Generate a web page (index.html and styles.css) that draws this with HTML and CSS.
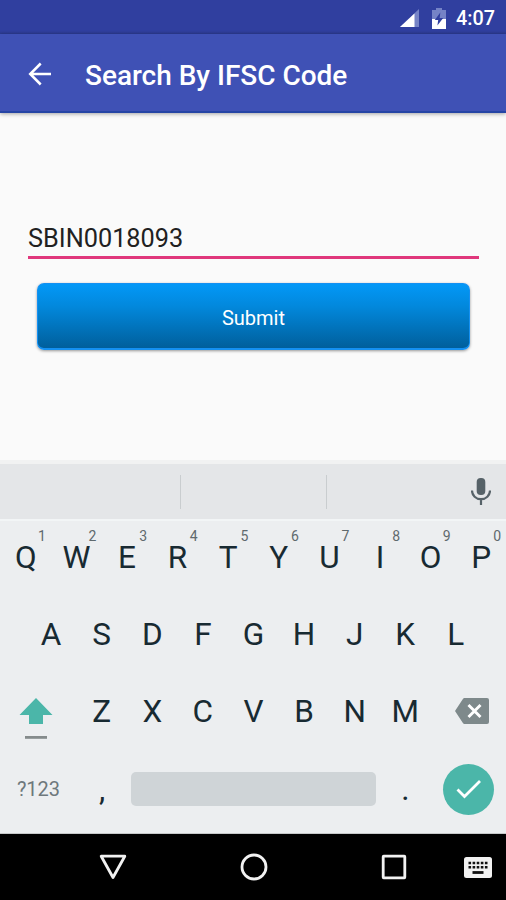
FILE: index.html
```html
<!DOCTYPE html>
<html lang="en">
<head>
<meta charset="utf-8">
<title>Search By IFSC Code</title>
<link rel="stylesheet" href="styles.css">
</head>
<body>
<div class="screen">
  <div class="status">
    <svg class="signal" width="21" height="20" viewBox="0 0 21 20"><path d="M20 1v18H1z" fill="#7583c6"/><path d="M15.500 5.500V19H1z" fill="#fff"/></svg>
    <svg class="battery" width="14" height="21" viewBox="0 0 14 21"><path d="M4 0h6v2h4v9H0V2h4z" fill="#7583c6"/><path d="M0 11h14v10H0z" fill="#fff"/><path d="M8.300 4.500 2.800 12h3.400l-.8 5.500L11.200 10H7.700z" fill="#303f9f"/></svg>
    <span class="time">4:07</span>
  </div>
  <header class="appbar">
    <svg class="back" width="24" height="24" viewBox="0 0 24 24" fill="none" stroke="#fff" stroke-width="2.500"><path d="M23 12H3M12.700 1.500 2.200 12l10.500 10.500"/></svg>
    <h1 class="title">Search By IFSC Code</h1>
  </header>
  <main class="form">
    <div class="field">SBIN0018093</div>
    <button class="submit">Submit</button>
  </main>
  <section class="keyboard">
    <div class="suggest">
      <span></span><span></span>
      <div class="micbox"><svg width="20" height="28" viewBox="0 0 20 28"><rect x="5.700" y="0" width="8.600" height="17" rx="4" fill="#566268"/><path d="M1 12.500c0 5 4 8.700 9 8.700s9-3.700 9-8.700M10 21v6" fill="none" stroke="#566268" stroke-width="2.200"/></svg></div>
    </div>
    <div class="row top">
      <div class="key">Q<sup>1</sup></div><div class="key">W<sup>2</sup></div><div class="key">E<sup>3</sup></div><div class="key">R<sup>4</sup></div><div class="key">T<sup>5</sup></div><div class="key">Y<sup>6</sup></div><div class="key">U<sup>7</sup></div><div class="key">I<sup>8</sup></div><div class="key">O<sup>9</sup></div><div class="key">P<sup>0</sup></div>
    </div>
    <div class="row middle">
      <div class="key">A</div><div class="key">S</div><div class="key">D</div><div class="key">F</div><div class="key">G</div><div class="key">H</div><div class="key">J</div><div class="key">K</div><div class="key">L</div>
    </div>
    <div class="row">
      <div class="key wide shift"><svg width="34" height="42" viewBox="0 0 34 42"><path d="M17 0 33.500 17H24v9H10v-9H.5z" fill="#4bb6a9"/><path d="M6 38h22v2.800H6z" fill="#858b8c"/></svg></div>
      <div class="key">Z</div><div class="key">X</div><div class="key">C</div><div class="key">V</div><div class="key">B</div><div class="key">N</div><div class="key">M</div>
      <div class="key wide delete"><svg width="34" height="26" viewBox="0 0 34 26"><path d="M9.500 0H32q2 0 2 2v22q0 2-2 2H9.500q-1 0-1.600-1L0 13 7.900 1q.6-1 1.600-1z" fill="#7e898b"/><path d="m13.500 7 12 12m0-12-12 12" stroke="#fff" stroke-width="2.900"/></svg></div>
    </div>
    <div class="row bottom">
      <div class="key symbols">?123</div>
      <div class="key comma">,</div>
      <div class="space"></div>
      <div class="key period">.</div>
      <div class="enter"><svg width="26" height="20" viewBox="0 0 26 20"><path d="m1.500 10.500 7 7L24 2" fill="none" stroke="#fff" stroke-width="2.800"/></svg></div>
    </div>
  </section>
  <nav class="nav">
    <svg class="nav-back" width="28" height="26" viewBox="0 0 28 26"><path d="M2.200 2.200h23.600L14 23.500z" fill="none" stroke="#f2f2f2" stroke-width="2.800" stroke-linejoin="round"/></svg>
    <svg class="nav-home" width="28" height="28" viewBox="0 0 28 28"><circle cx="14" cy="14" r="12" fill="none" stroke="#f2f2f2" stroke-width="2.800"/></svg>
    <svg class="nav-recent" width="26" height="26" viewBox="0 0 26 26"><rect x="2.200" y="2.200" width="21.600" height="21.600" rx=".5" fill="none" stroke="#f2f2f2" stroke-width="2.800"/></svg>
    <svg class="nav-ime" width="28" height="21" viewBox="0 0 28 21"><rect width="28" height="21" rx="2.500" fill="#f2f2f2"/><path d="M4.500 6h20M4.500 10.300h20" stroke="#111" stroke-width="2.400" stroke-dasharray="2.600 1.500"/><path d="M8.500 15.500h11" stroke="#111" stroke-width="2.800"/></svg>
  </nav>
</div>
</body>
</html>
```
FILE: styles.css
```css
* { box-sizing: border-box; }
body { margin: 0; font-family: Roboto, sans-serif; }
.screen { width: 506px; height: 900px; display: flex; flex-direction: column; background: #fafafa; overflow: hidden; }

.status { height: 34px; flex: none; display: flex; align-items: center; padding: 2px 11px 0 0; justify-content: flex-end; background: linear-gradient(#303f9f 31px, #2b3a8f); }
.signal { margin-right: 12px; }
.battery { margin-right: 10px; }
.time { margin-top: 2px; color: #fff; font-size: 19.800px; font-weight: 500; line-height: 24px; }

.appbar { height: 79px; flex: none; display: flex; align-items: center; padding: 0 28px; background: #3f51b5; border-bottom: 2px solid #2645a5; box-shadow: 0 1px 4px rgba(0,0,0,.35); }
.back { margin-top: 2px; }
.title { margin: 6px 0 0 33px; color: #fff; font-size: 28px; font-weight: 500; line-height: 32px; letter-spacing: -.02px; white-space: nowrap; }

.form { flex: 1; display: flex; flex-direction: column; padding: 106px 27px 0 28px; }
.field { height: 40px; font-size: 25.300px; line-height: 40px; color: #212121; border-bottom: 3px solid #e0377c; }
.submit { height: 67px; margin: 24px 9px 0 9px; padding: 3px 0 0; border: 1px solid #1490f2; border-bottom-width: 2px; border-radius: 7px; background: linear-gradient(#0398f7, #0288dc 35%, #005f9c); color: #fff; font: 20px Roboto, sans-serif; box-shadow: 0 1px 3px rgba(0,0,0,.4); }

.keyboard { height: 374px; flex: none; display: flex; flex-direction: column; background: #eceef0; border-top: 4px solid #f1f2f2; border-bottom: 1px solid #c6c8c9; }
.suggest { height: 55px; flex: none; display: flex; align-items: center; background: #e4e6e8; box-shadow: 0 2px 0 #f2f5f6; }
.suggest span { height: 34px; border-right: 1px solid #c9cdcf; }
.suggest span:nth-child(1) { width: 181px; }
.suggest span:nth-child(2) { width: 146px; }
.micbox { margin: 0 15px 0 auto; display: flex; }
.row { height: 77.300px; flex: none; display: flex; }
.middle { padding: 0 25.300px; }
.key { position: relative; width: 50.600px; flex: none; display: flex; align-items: center; justify-content: center; padding-left: 1px; font-size: 31.500px; color: #182a32; }
.row .key { padding-bottom: 1px; }
.key sup { position: absolute; left: 38px; top: 8px; font-size: 14px; line-height: 18px; color: #5f696d; }
.wide { width: 75.900px; }
.row .shift { padding: 14px 4px 0 0; }
.row .delete { padding: 0 0 2px 8px; }
.bottom { align-items: center; }
.symbols { width: 76px; font-size: 20px; color: #6e787c; }
.comma, .period { width: 55px; height: 77px; }
.comma { padding-right: 4px; }
.space { width: 245px; height: 34px; margin-bottom: 1px; border-radius: 5px; background: #cfd4d7; }
.period { padding-left: 4px; }
.enter { width: 51px; height: 51px; margin: 0 0 1px 12px; border-radius: 50%; background: #4bb6a9; display: flex; align-items: center; justify-content: center; }

.nav { height: 66px; flex: none; display: flex; align-items: center; background: #000; }
.nav-back { margin-left: 99px; }
.nav-home { margin-left: 113px; }
.nav-recent { margin-left: 113px; }
.nav-ime { margin-left: 57px; }
```
